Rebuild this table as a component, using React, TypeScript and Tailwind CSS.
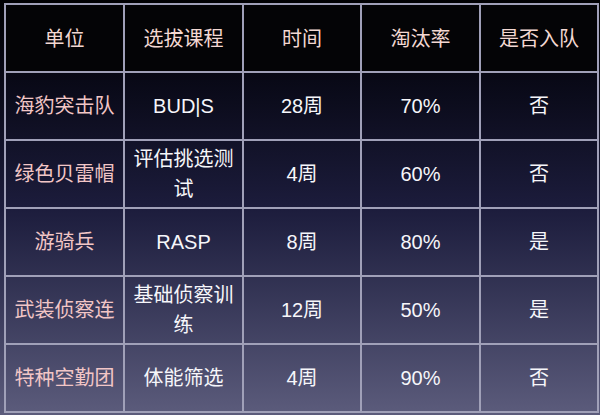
import React from 'react';

const header = ['单位', '选拔课程', '时间', '淘汰率', '是否入队'];

const rows = [
  ['海豹突击队', 'BUD|S', '28周', '70%', '否'],
  ['绿色贝雷帽', '评估挑选测试', '4周', '60%', '否'],
  ['游骑兵', 'RASP', '8周', '80%', '是'],
  ['武装侦察连', '基础侦察训练', '12周', '50%', '是'],
  ['特种空勤团', '体能筛选', '4周', '90%', '否'],
];

const font = { fontFamily: '"Liberation Sans", "Noto Sans CJK SC", sans-serif' };

const App: React.FC = () => {
  return (
    <div
      className="w-[600px] h-[415px] overflow-hidden bg-gradient-to-b from-[#020204] via-[#1c1c3c] to-[#5c5c7c] pt-[3px] pl-[4px]"
      style={font}
    >
      <div className="grid grid-cols-[119px_119px_118px_119px_118px] border-l-2 border-t-2 border-[#a0a0b8] w-[595px]">
        {header.map((h) => (
          <div
            key={h}
            className="h-[68px] flex items-center justify-center pt-[2px] border-r-2 border-b-2 border-[#a0a0b8] bg-[#040406] text-[20px] text-[#f3d8d2]"
          >
            {h}
          </div>
        ))}
        {rows.map((r, i) =>
          r.map((c, j) => (
            <div
              key={i + '-' + j}
              className={
                'h-[68px] flex items-center justify-center text-center px-2 border-r-2 border-b-2 border-[#a0a0b8] text-[20px] leading-[30px] ' +
                (j === 0 ? 'text-[#f2c6c6]' : 'text-[#f6f6fa]')
              }
            >
              {c}
            </div>
          ))
        )}
      </div>
    </div>
  );
};

export default App;
